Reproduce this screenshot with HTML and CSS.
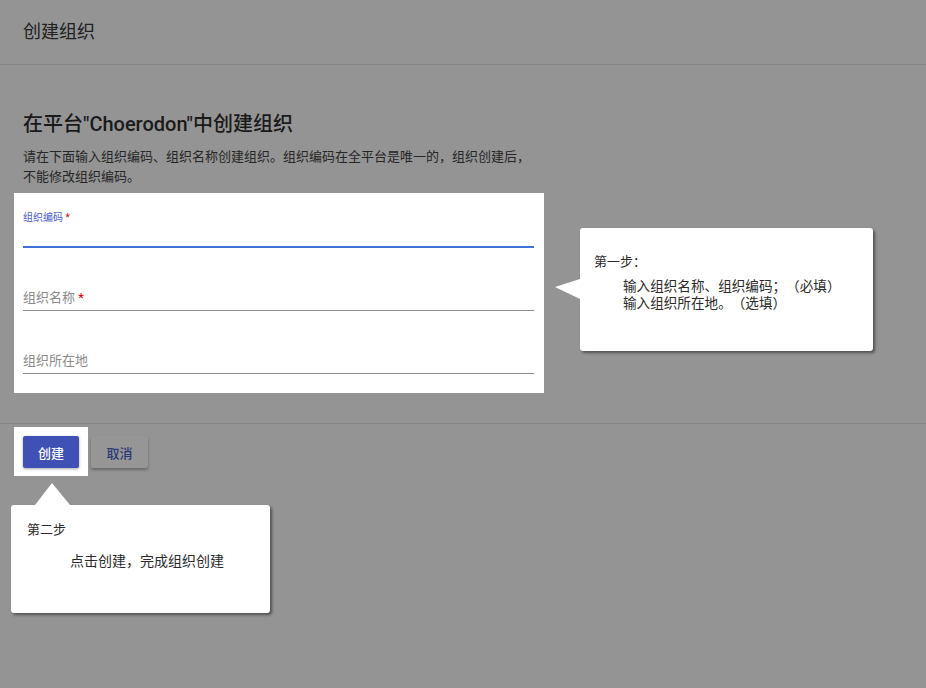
FILE: index.html
```html
<!DOCTYPE html>
<html lang="zh-CN">
<head>
<meta charset="utf-8">
<title>创建组织</title>
<link rel="stylesheet" href="styles.css">
</head>
<body>
<div class="page">
  <header class="header">
    <h1 class="header-title">创建组织</h1>
  </header>
  <main class="content">
    <h2 class="heading">在平台"Choerodon"中创建组织</h2>
    <p class="desc">请在下面输入组织编码、组织名称创建组织。组织编码在全平台是唯一的，组织创建后，<br>不能修改组织编码。</p>
    <div class="form-box">
      <div class="field field-active">
        <span class="label-small">组织编码 <span class="req">*</span></span>
      </div>
      <div class="field">
        <span class="label">组织名称 <span class="req">*</span></span>
      </div>
      <div class="field">
        <span class="label">组织所在地</span>
      </div>
    </div>
  </main>
  <footer class="footer">
    <div class="btn-box">
      <button class="btn btn-primary">创建</button>
    </div>
    <button class="btn btn-cancel">取消</button>
  </footer>

  <div class="tip tip-one">
    <div class="tip-title">第一步：</div>
    <div class="tip-body tip-body-one">
      <div class="tip-line">输入组织名称、组织编码；（必填）</div>
      <div class="tip-line">输入组织所在地。（选填）</div>
    </div>
  </div>
  <div class="tip tip-two">
    <div class="tip-title">第二步</div>
    <div class="tip-body tip-body-two">点击创建，完成组织创建</div>
  </div>
</div>
</body>
</html>
```
FILE: styles.css
```css
html, body {
  margin: 0;
  padding: 0;
}
body {
  background: #949494;
  font-family: Roboto, "Noto Sans CJK SC", sans-serif;
  color: #1e1e1e;
  width: 926px;
  height: 688px;
  overflow: hidden;
}
.page {
  position: relative;
  height: 688px;
}
.header {
  height: 64px;
  border-bottom: 1px solid #878787;
  display: flex;
  align-items: center;
  padding: 0 23px;
}
.header-title {
  margin: 0;
  font-size: 18px;
  font-weight: 400;
  line-height: 24px;
  color: #202020;
}
.content {
  padding: 0 23px;
}
.heading {
  margin: 45px 0 0;
  font-size: 20px;
  font-weight: 500;
  line-height: 28px;
  color: #1a1a1a;
}
.desc {
  margin: 9px 0 0;
  font-size: 13px;
  line-height: 20px;
  color: #262626;
}
.form-box {
  margin: 6px 0 0 -9px;
  width: 511px;
  background: #fff;
  padding: 0 10px 19px 9px;
}
.field {
  height: 63px;
  box-sizing: border-box;
  border-bottom: 1px solid #8c8c8c;
  display: flex;
  align-items: flex-end;
  padding-bottom: 3px;
}
.field-active {
  height: 55px;
  border-bottom: 2px solid #3d72d9;
  align-items: flex-start;
  padding-top: 19px;
}
.label-small {
  font-size: 10px;
  line-height: 12px;
  color: #4a5cc6;
}
.label {
  font-size: 13px;
  line-height: 18px;
  color: #8a8a8a;
}
.req {
  color: #d50000;
}
.footer {
  margin-top: 30px;
  border-top: 1px solid #878787;
  padding: 3px 0 0 14px;
  display: flex;
  align-items: flex-start;
}
.btn-box {
  background: #fff;
  padding: 9px 9px 8px 9px;
}
.btn {
  display: block;
  height: 32px;
  border: none;
  border-radius: 2px;
  font-family: Roboto, "Noto Sans CJK SC", sans-serif;
  font-size: 13px;
  font-weight: 500;
  padding: 0;
  cursor: pointer;
}
.btn-primary {
  width: 56px;
  background: #3f51b5;
  color: #fff;
  box-shadow: 0 1px 3px rgba(0, 0, 0, 0.35);
}
.btn-cancel {
  margin: 9px 0 0 3px;
  width: 57px;
  background: #969696;
  color: #2b3878;
  box-shadow: 0 2px 3px rgba(0, 0, 0, 0.3);
}
.tip {
  position: absolute;
  background: #fff;
  border-radius: 3px;
  box-shadow: 2px 2px 3px rgba(0, 0, 0, 0.45);
  font-family: "Noto Sans CJK SC", sans-serif;
  font-size: 13px;
  color: #2a2a2a;
  box-sizing: border-box;
  text-spacing-trim: space-all;
}
.tip::before {
  content: "";
  position: absolute;
  width: 0;
  height: 0;
}
.tip-one {
  left: 580px;
  top: 228px;
  width: 293px;
  height: 123px;
  padding: 24px 14px 0;
}
.tip-one::before {
  left: -25px;
  top: 51px;
  border-right: 25px solid #fff;
  border-top: 8px solid transparent;
  border-bottom: 12px solid transparent;
}
.tip-two {
  left: 11px;
  top: 505px;
  width: 259px;
  height: 108px;
  padding: 15px 16px 0;
}
.tip-two::before {
  left: 24px;
  top: -22px;
  border-bottom: 22px solid #fff;
  border-left: 17px solid transparent;
  border-right: 18px solid transparent;
}
.tip-title {
  line-height: 18px;
}
.tip-body-one {
  margin: 7px 0 0 29px;
  font-size: 13.6px;
}
.tip-line {
  height: 17px;
  line-height: 17px;
}
.tip-body-two {
  margin: 12px 0 0 43px;
  font-size: 14px;
  line-height: 20px;
}
```
